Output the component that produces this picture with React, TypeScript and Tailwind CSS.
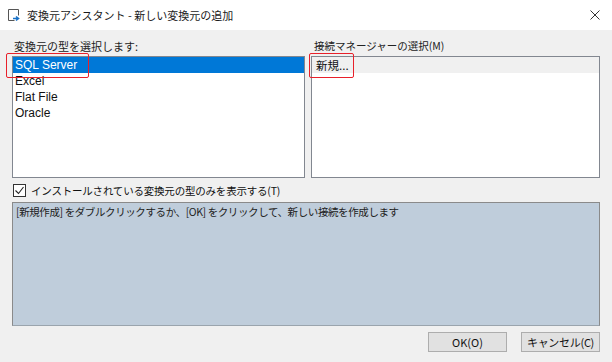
const font = { fontFamily: '"Noto Sans CJK JP", "Noto Sans", sans-serif' };

const sourceTypes = ['SQL Server', 'Excel', 'Flat File', 'Oracle'];

function WindowIcon() {
  return (
    <svg width="14" height="14" viewBox="0 0 14 14" className="flex-shrink-0">
      <path d="M1.5 1.5h10v6M1.5 1.5v11h6" fill="none" stroke="#555" strokeWidth="1" />
      <path d="M6 10.5h5M9 8.5l2.5 2-2.5 2" fill="none" stroke="#1a73c9" strokeWidth="1.6" />
    </svg>
  );
}

export default function App() {
  return (
    <div
      className="w-[612px] h-[362px] bg-[#f0f0f0] flex flex-col text-[11px] text-black overflow-hidden"
      style={font}
    >
      {/* Title bar */}
      <div className="w-[612px] h-[30px] bg-white flex items-center pl-[7px] flex-shrink-0">
        <WindowIcon />
        <span className="ml-[6px] leading-[16px] text-[#1a1a1a]">変換元アシスタント - 新しい変換元の追加</span>
        <div className="ml-auto mr-[12px] w-[10px] h-[10px]">
          <svg width="10" height="10" viewBox="0 0 10 10">
            <path d="M0.5 0.5l9 9M9.5 0.5l-9 9" stroke="#333" strokeWidth="1" />
          </svg>
        </div>
      </div>

      {/* Body */}
      <div className="w-[588px] ml-[12px] flex-1 flex flex-col pt-[8px]">
        <div className="flex gap-[6px]">
          {/* Source type list */}
          <div className="w-[293px] flex-shrink-0 flex flex-col">
            <div className="leading-[16px] pl-[2px] mb-[2px] text-[#222]">変換元の型を選択します:</div>
            <div className="relative h-[122px] bg-white border border-[#828790]">
              {sourceTypes.map((t, i) => (
                <div
                  key={t}
                  className={`h-[16px] leading-[16px] pl-[2px] text-[12px] ${
                    i === 0 ? 'bg-[#0078d7] text-white' : 'text-[#111]'
                  }`}
                  style={{ fontFamily: '"Liberation Sans", Arial, sans-serif' }}
                >
                  {t}
                </div>
              ))}
              <div className="absolute left-[-7px] top-[-4px] w-[83px] h-[25px] border-[1.5px] border-[#e8202a] rounded-[2px]" />
            </div>
          </div>

          {/* Connection manager list */}
          <div className="w-[289px] flex-shrink-0 flex flex-col">
            <div className="leading-[16px] pl-[3px] mb-[2px] text-[10.5px] text-[#222]">接続マネージャーの選択(M)</div>
            <div className="relative h-[122px] bg-white border border-[#828790]">
              <div className="h-[16px] leading-[16px] pl-[4px] bg-[#f0f0f0] text-[#111] text-[11.5px]">新規...</div>
              <div className="absolute left-[-3px] top-[-4px] w-[45px] h-[25px] border-[1.5px] border-[#e8202a] rounded-[2px]" />
            </div>
          </div>
        </div>

        {/* Checkbox */}
        <div className="flex items-center mt-[6px] h-[13px]">
          <div className="w-[13px] h-[13px] border border-[#333] bg-white flex items-center justify-center ml-[1px]">
            <svg width="11" height="11" viewBox="0 0 11 11">
              <path d="M1.5 5.5l3 3 5-6.5" fill="none" stroke="#222" strokeWidth="1.1" />
            </svg>
          </div>
          <span className="ml-[5px] leading-[16px] text-[10.5px] tracking-[-0.2px] text-[#111]">
            インストールされている変換元の型のみを表示する(T)
          </span>
        </div>

        {/* Description */}
        <div className="mt-[5px] h-[124px] bg-[#bfcddb] border border-[#8a8a8a] border-b-[#9aa4ad] pl-[3px] pt-[1px]">
          <div className="leading-[16px] text-[10.5px] tracking-[-0.4px] text-[#222]">
            [新規作成] をダブルクリックするか、[OK] をクリックして、新しい接続を作成します
          </div>
        </div>

        {/* Buttons */}
        <div className="flex justify-end gap-[14px] mt-[6px]">
          <button className="w-[79px] h-[20px] bg-[#e1e1e1] border border-[#adadad] leading-[16px] text-[#111]">
            OK(O)
          </button>
          <button className="w-[79px] h-[20px] bg-[#e1e1e1] border border-[#adadad] leading-[16px] tracking-[-0.3px] text-[#111]">
            キャンセル(C)
          </button>
        </div>
      </div>
    </div>
  );
}
